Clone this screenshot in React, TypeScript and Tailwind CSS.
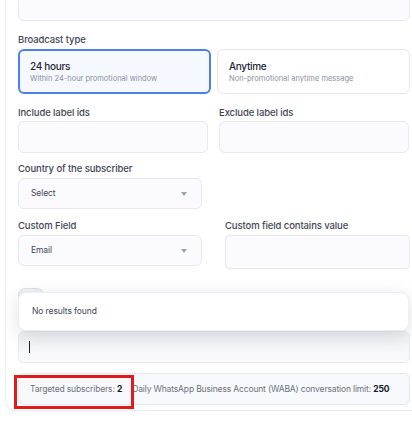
import React from "react";

const font = { fontFamily: "Inter, 'Noto Sans', sans-serif" };

function Caret() {
  return (
    <svg width="6" height="4" viewBox="0 0 6 4" className="absolute right-[14px] top-1/2 -translate-y-1/2">
      <path d="M0 0 L6 0 L3 4 Z" fill="#9ca3af" />
    </svg>
  );
}

const label = "text-[9.5px] leading-[14px] font-medium tracking-[-0.1px] text-[#3f4653]";

export default function App() {
  return (
    <div className="w-[412px] h-[433px] overflow-hidden bg-white" style={font}>
      <div className="ml-[5px] -mt-[12px] w-[420px] border-l border-b border-[#eceef3] rounded-bl-[10px] bg-white pl-[12px] pr-[16px] pb-[5px]">
        <div className="w-[392px]">
          <div className="h-[33px] rounded-[6px] border border-[#e6e8f3] bg-[#fbfbff]" />

          <div className={"mt-[12px] " + label}>Broadcast type</div>
          <div className="mt-[2px] grid grid-cols-2 gap-[6px]">
            <div className="h-[45px] rounded-[6px] border-2 border-[#4a7ff0] bg-[#f6f8ff] pl-[10px] pt-[8px]">
              <div className="text-[10px] leading-[14px] font-medium tracking-[-0.3px] text-[#1f2633]">24 hours</div>
              <div className="text-[7.5px] leading-[11px] text-[#8a909c]">Within 24-hour promotional window</div>
            </div>
            <div className="h-[45px] rounded-[6px] border border-[#e6e8f0] bg-white pl-[11px] pt-[9px]">
              <div className="text-[10px] leading-[14px] font-medium tracking-[-0.3px] text-[#1f2633]">Anytime</div>
              <div className="text-[7.5px] leading-[11px] text-[#8a909c]">Non-promotional anytime message</div>
            </div>
          </div>

          <div className="mt-[12px] grid grid-cols-[190px_190px] gap-[11px]">
            <div>
              <div className={label}>Include label ids</div>
              <div className="mt-[1px] h-[32px] rounded-[6px] border border-[#e6e8f3] bg-[#fbfbff]" />
            </div>
            <div>
              <div className={label}>Exclude label ids</div>
              <div className="mt-[1px] h-[32px] rounded-[6px] border border-[#e6e8f3] bg-[#fbfbff]" />
            </div>
          </div>

          <div className={"mt-[9px] " + label}>Country of the subscriber</div>
          <div className="relative mt-[2px] w-[184px] h-[31px] rounded-[6px] border border-[#e6e8f3] bg-[#fbfbff] flex items-center pl-[12px]">
            <span className="text-[8.5px] tracking-[-0.1px] text-[#3f4653]">Select</span>
            <Caret />
          </div>

          <div className="mt-[10px] grid grid-cols-[184px_1fr] gap-[23px]">
            <div>
              <div className={label}>Custom Field</div>
              <div className="relative mt-[2px] h-[31px] rounded-[6px] border border-[#e6e8f3] bg-[#fbfbff] flex items-center pl-[12px]">
                <span className="text-[8.5px] tracking-[-0.1px] text-[#3f4653]">Email</span>
                <Caret />
              </div>
            </div>
            <div>
              <div className={label}>Custom field contains value</div>
              <div className="mt-[2px] h-[34px] rounded-[4px] border border-[#e6e8f3] bg-[#fbfbff]" />
            </div>
          </div>

          <div className="relative mt-[19px] h-[43px]">
            <div className="w-[26px] h-[14px] rounded-full border border-[#dde0e8] bg-[#f1f2f6]" />
            <div className="absolute left-0 top-[4px] w-[391px] h-[39px] rounded-[8px] border border-[#eceef3] bg-white shadow-[0_4px_18px_rgba(0,0,0,0.12)] flex items-center pl-[13px] z-10">
              <span className="text-[8.5px] tracking-[-0.1px] text-[#3f4653]">No results found</span>
            </div>
          </div>

          <div className="h-[32px] rounded-[6px] border border-[#e6e8f3] bg-gradient-to-b from-[#eef0f3] to-[#fbfbfd] flex items-center pl-[10px]">
            <div className="w-px h-[12px] bg-[#222]" />
          </div>

          <div className="relative mt-[10px] h-[32px] rounded-[6px] border border-[#e6e8f0] bg-[#f8f9fc] flex items-center pl-[11px] gap-[10px] text-[8.5px] tracking-[-0.15px] text-[#6b7280] whitespace-nowrap">
            <span>Targeted subscribers: <b className="text-[#111827]">2</b></span>
            <span>Daily WhatsApp Business Account (WABA) conversation limit: <b className="text-[#111827]">250</b></span>
            <div className="absolute left-[-5px] top-[1px] w-[120px] h-[34px] border-[3px] border-[#e11b1b]" />
          </div>
        </div>
      </div>
    </div>
  );
}
